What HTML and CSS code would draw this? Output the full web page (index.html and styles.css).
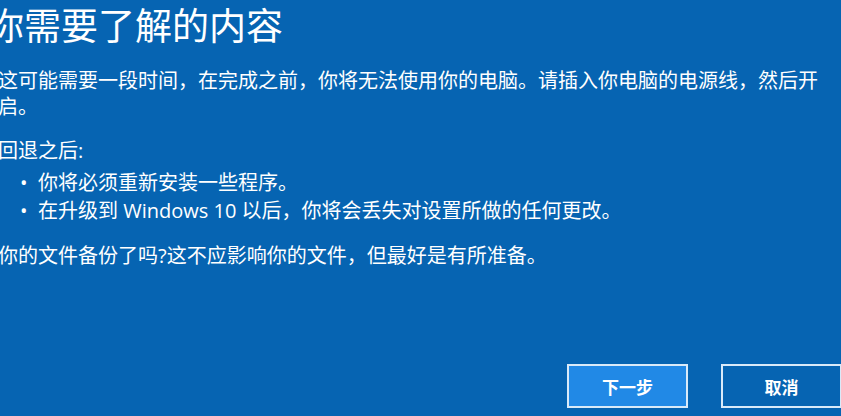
FILE: index.html
```html
<!DOCTYPE html>
<html lang="zh-CN">
<head>
<meta charset="utf-8">
<title>你需要了解的内容</title>
<link rel="stylesheet" href="styles.css">
</head>
<body>
<div class="page">
  <div class="content">
    <h1 class="title">你需要了解的内容</h1>
    <p class="para first">这可能需要一段时间，在完成之前，你将无法使用你的电脑。请插入你电脑的电源线，然后开启。</p>
    <p class="para after">回退之后:</p>
    <ul class="list">
      <li>你将必须重新安装一些程序。</li>
      <li>在升级到 Windows 10 以后，你将会丢失对设置所做的任何更改。</li>
    </ul>
    <p class="para last">你的文件备份了吗?这不应影响你的文件，但最好是有所准备。</p>
  </div>
  <div class="actions">
    <button class="btn primary">下一步</button>
    <button class="btn">取消</button>
  </div>
</div>
</body>
</html>
```
FILE: styles.css
```css
html, body {
  margin: 0;
  padding: 0;
  width: 841px;
  height: 416px;
  overflow: hidden;
  background: #0664b2;
}
.page {
  height: 416px;
  display: flex;
  flex-direction: column;
  color: #ffffff;
  font-family: "Open Sans", "Noto Sans CJK SC", sans-serif;
  box-sizing: border-box;
  padding-bottom: 8px;
}
.content {
  margin-left: -2px;
}
.title {
  margin: 8px 0 0 -11px;
  font-size: 37px;
  line-height: 36px;
  font-weight: normal;
}
.para {
  font-size: 20px;
  line-height: 26px;
  margin: 0;
  width: 832px;
}
.first { margin-top: 24px; }
.after { margin-top: 18px; }
.list {
  list-style: none;
  margin: 5px 0 0 0;
  padding: 0 0 0 40px;
  font-size: 20px;
  line-height: 28px;
}
.list li {
  position: relative;
}
.list li::before {
  content: "•";
  position: absolute;
  left: -18px;
  font-family: "Open Sans", sans-serif;
}
.last { margin-top: 18px; }
.actions {
  margin-top: auto;
  display: flex;
  justify-content: flex-end;
  gap: 33px;
  margin-right: -1px;
}
.btn {
  width: 121px;
  height: 44px;
  box-sizing: border-box;
  border: 2px solid #d9eaf9;
  background: transparent;
  color: #ffffff;
  font-family: "Noto Sans CJK SC", sans-serif;
  font-size: 17px;
  font-weight: bold;
  padding: 0;
}
.primary {
  background: #2189e6;
}
```
